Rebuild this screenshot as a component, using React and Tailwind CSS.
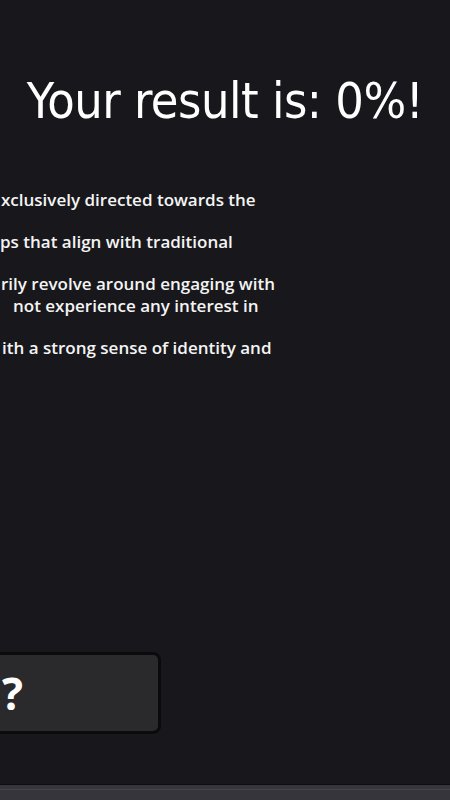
export default function App() {
  const lines = [
    { text: 'xclusively directed towards the', shift: 'ml-[1px]', gap: 'mt-0' },
    { text: 'ps that align with traditional', shift: 'ml-0', gap: 'mt-[20px]' },
    { text: 'rily revolve around engaging with', shift: 'ml-[1px]', gap: 'mt-[20px]' },
    { text: 'not experience any interest in', shift: 'ml-[13px]', gap: 'mt-0' },
    { text: 'ith a strong sense of identity and', shift: 'ml-[2px]', gap: 'mt-[20px]' },
  ];

  return (
    <div className="w-[450px] h-[800px] overflow-hidden bg-[#18181c] flex flex-col text-white">
      {/* Result title */}
      <div className="h-[170px] pt-[66px] flex justify-center">
        <h1
          className="text-[50px] leading-[70px] font-extralight whitespace-nowrap tracking-[-0.5px]"
          style={{ fontFamily: '"Comic Sans MS", "DejaVu Sans Condensed", "Liberation Sans Narrow", sans-serif' }}
        >
          Your result is: 0%!
        </h1>
      </div>

      {/* Description, wider than the screen and cut on the left */}
      <div
        className="pt-[19px] text-[17px] leading-[22px] font-semibold text-[#f4f4f4]"
        style={{ fontFamily: '"Open Sans", "Noto Sans", sans-serif' }}
      >
        {lines.map((l) => (
          <div key={l.text} className={`whitespace-nowrap ${l.shift} ${l.gap}`}>
            {l.text}
          </div>
        ))}
      </div>

      <div className="flex-1" />

      {/* Cut-off action button */}
      <div className="h-[82px] w-[200px] -ml-[39px] mb-[50px] rounded-[8px] border-[3px] border-[#0b0b0d] bg-[#2a2a2c] flex items-center pl-[38px]">
        <span
          className="text-[44px] font-bold leading-none"
          style={{ fontFamily: '"Open Sans", "Noto Sans", sans-serif' }}
        >
          ?
        </span>
      </div>

      {/* Bottom bar */}
      <div className="h-[16px] border-t border-[#0d0d0f] bg-[#35353b] flex flex-col">
        <div className="h-[4px]" />
        <div className="h-px bg-[#45454b]" />
      </div>
    </div>
  );
}
